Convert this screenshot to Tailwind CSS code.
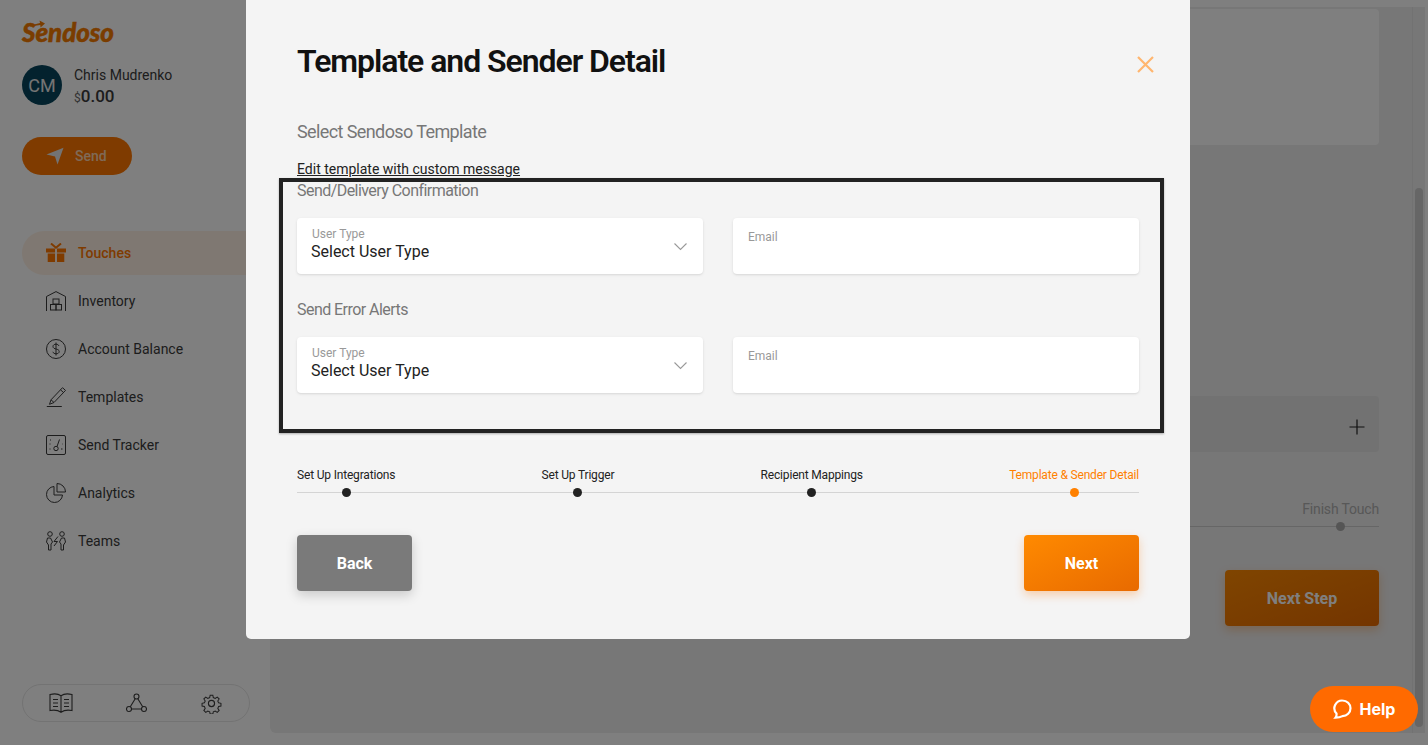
<!DOCTYPE html>
<html lang="en">
<head>
  <meta charset="UTF-8" />
  <title>Template and Sender Detail</title>
  <script src="https://cdn.jsdelivr.net/npm/@tailwindcss/browser@4"></script>
</head>
<body class="font-['Roboto',sans-serif] text-[#3a3a3a]">
  <div class="relative w-[1428px] h-[745px] overflow-hidden bg-white flex">

    <!-- Sidebar -->
    <aside class="w-[270px] shrink-0 h-full flex flex-col pl-[22px]">
      <div class="relative h-[22px] mt-[21px] flex items-center">
        <span class="font-['Lato',sans-serif] font-black italic text-[26px] leading-[22px] tracking-[-0.1px] text-[#f47a00] [-webkit-text-stroke:0.5px_#f47a00]">Sendoso</span>
        <svg class="absolute left-[8px] top-[-1px]" width="16" height="8" viewBox="0 0 16 8" fill="#f47a00"><path d="M0 5.500 L10 3 L9.500 0.500 L15 3.500 L10.500 7.500 L10.300 5 L0 6.500Z"/></svg>
      </div>

      <div class="flex items-center mt-[22px] h-[40px]">
        <div class="w-[40px] h-[40px] rounded-full bg-[#06455c] flex items-center justify-center text-[#e8e8e8] text-[18px]">CM</div>
        <div class="ml-[12px] pt-[5px]">
          <div class="text-[14px] leading-[18px]">Chris Mudrenko</div>
          <div class="text-[17px] leading-[24px] font-medium"><span class="text-[12px] font-normal text-[#666]">$</span>0.00</div>
        </div>
      </div>

      <button class="mt-[32px] w-[110px] h-[38px] rounded-full bg-[#ff7700] text-white/70 font-medium text-[14px] flex items-center pl-[24px]">
        <svg width="18" height="18" viewBox="0 0 18 18" fill="#e6e6e6"><path d="M0.500 7.500 L17.500 0.800 L11.500 17.500 L9 9.500Z"/></svg>
        <span class="ml-[11px]">Send</span>
      </button>

      <nav class="mt-[56px] text-[14px]">
        <a class="flex items-center h-[44px] w-[224px] rounded-l-full rounded-r-[22px] bg-[#ff7700]/10 pl-[24px] text-[#ff7700] font-medium">
          <svg width="20" height="20" viewBox="0 0 20 20" fill="#ff7700"><path d="M0 5.500h9v4H0zM11 5.500h9v4h-9zM1.700 10.500H9V19H1.700zM11 10.500h7.300V19H11z"/><path d="M5 0.500 L10 4.800 L15 0.500" fill="none" stroke="#ff7700" stroke-width="2"/></svg>
          <span class="ml-[12px]">Touches</span>
        </a>
        <a class="flex items-center h-[48px] pl-[24px] mt-[2px]">
          <svg width="20" height="20" viewBox="0 0 20 20" fill="none" stroke="#3a3a3a" stroke-width="1"><path d="M0.500 20V5.500L10 0.600l9.500 4.900V20"/><rect x="7" y="8" width="6" height="5"/><rect x="4.500" y="13.500" width="5.500" height="5.500"/><rect x="10" y="13.500" width="5.500" height="5.500"/></svg>
          <span class="ml-[12px]">Inventory</span>
        </a>
        <a class="flex items-center h-[48px] pl-[24px]">
          <svg width="20" height="20" viewBox="0 0 20 20" fill="none" stroke="#3a3a3a" stroke-width="1"><circle cx="10" cy="10" r="9.500"/><path d="M13 7c-.5-1.200-1.600-1.800-3-1.800-1.700 0-3 .8-3 2.300 0 3.400 6.200 1.700 6.200 5 0 1.500-1.400 2.300-3.200 2.300-1.500 0-2.700-.7-3.200-2M10 3.500v13"/></svg>
          <span class="ml-[12px]">Account Balance</span>
        </a>
        <a class="flex items-center h-[48px] pl-[24px]">
          <svg width="20" height="20" viewBox="0 0 20 20" fill="none" stroke="#3a3a3a" stroke-width="1"><path d="M16.500 0.700l3 2.700L8 15.500l-4.500 1.800 1.500-4.500zM14.500 2.800l3 2.700M5 12.800l3 2.700M0.800 19.500h15"/></svg>
          <span class="ml-[12px]">Templates</span>
        </a>
        <a class="flex items-center h-[48px] pl-[24px]">
          <svg width="20" height="20" viewBox="0 0 20 20" fill="none" stroke="#3a3a3a" stroke-width="1"><rect x="0.500" y="0.500" width="19" height="19" rx="1.500"/><path d="M4 5h1M3.500 9h1M3.500 14h1M15 14h1.500M16 9h.5"/><circle cx="10" cy="13.500" r="2.200"/><path d="M11 11.500l2.500-7"/></svg>
          <span class="ml-[12px]">Send Tracker</span>
        </a>
        <a class="flex items-center h-[48px] pl-[24px]">
          <svg width="20" height="20" viewBox="0 0 20 20" fill="none" stroke="#3a3a3a" stroke-width="1"><path d="M8 3.500a8 8 0 1 0 8.500 8.500H8z"/><path d="M11 0.500a8.500 8.500 0 0 1 8.500 8.500H11z"/></svg>
          <span class="ml-[12px]">Analytics</span>
        </a>
        <a class="flex items-center h-[48px] pl-[24px]">
          <svg width="20" height="20" viewBox="0 0 20 20" fill="none" stroke="#3a3a3a" stroke-width="1"><circle cx="4" cy="3" r="2.300"/><circle cx="16" cy="3" r="2.300"/><path d="M0.500 11l1-4h3l2 4-1.500 2v6H2.500v-5zM19.500 11l-1-4h-3l-2 4 1.500 2v6h2.500v-5zM12 5.500L8 10.500h3.500L8 15"/></svg>
          <span class="ml-[12px]">Teams</span>
        </a>
      </nav>

      <div class="absolute left-[22px] top-[684px] w-[228px] h-[38px] rounded-full border border-[#e6e6e6]">
        <svg class="absolute left-[26px] top-[8px]" width="24" height="21" viewBox="0 0 24 21" fill="none" stroke="#3a3a3a" stroke-width="1.100"><path d="M1 1.500c4-1 8-1 11 1.200 3-2.200 7-2.200 11-1.200v16c-4-.8-8-.5-11 1.800-3-2.300-7-2.600-11-1.800zM12 2.700v16.600M4 6.500h5M4 10h5M4 13.500h5M15 6.500h5M15 10h5M15 13.500h5"/></svg>
        <svg class="absolute left-[103px] top-[8px]" width="21" height="20" viewBox="0 0 21 20" fill="none" stroke="#3a3a3a" stroke-width="1.100"><circle cx="10.500" cy="3.500" r="2.500"/><circle cx="3" cy="16" r="2.500"/><circle cx="18" cy="16" r="2.500"/><path d="M9.200 5.700L4.300 13.800M11.800 5.700l4.900 8.100M5.500 16h10"/></svg>
        <svg class="absolute left-[178px] top-[8px]" width="21" height="21" viewBox="0 0 24 24" fill="none" stroke="#3a3a3a" stroke-width="1.300"><circle cx="12" cy="12" r="3.500"/><path d="M10.300 1.500h3.400l.6 3 2.400 1 2.600-1.700 2.400 2.400-1.700 2.600 1 2.400 3 .6v3.400l-3 .6-1 2.400 1.700 2.600-2.400 2.400-2.600-1.700-2.400 1-.6 3h-3.400l-.6-3-2.400-1-2.600 1.700-2.400-2.400 1.700-2.600-1-2.400-3-.6v-3.400l3-.6 1-2.400-1.700-2.600 2.400-2.400 2.600 1.700 2.400-1z" transform="translate(1.200 1.200) scale(.9)"/></svg>
      </div>
    </aside>

    <!-- Page behind the modal -->
    <main class="flex-1 mt-[7px] mb-[12px] mr-[3px] bg-[#eeeeee] rounded-l-[6px] flex">
      <div class="flex-1 pl-[30px] pr-[33px] pt-[2px]">
        <div class="h-[136px] bg-white rounded-[4px]"></div>
        <div class="mt-[251px] h-[56px] bg-[#e4e4e4] rounded-[4px] flex items-center justify-end pr-[15px]">
          <svg class="mt-[6px] ml-px -mr-px" width="16" height="16" viewBox="0 0 16 16" stroke="#222" stroke-width="1.200"><path d="M8 0.500v15M0.500 8h15"/></svg>
        </div>
        <div class="mt-[47px] relative">
          <div class="text-right text-[14px] leading-[20px] tracking-[-0.18px] text-[#b0b0b0]">Finish Touch</div>
          <div class="mt-[7px] h-px bg-[#ccc]"></div>
          <div class="absolute right-[34px] top-[23px] w-[9px] h-[9px] rounded-full bg-[#aaa]"></div>
        </div>
        <div class="flex justify-end mt-[43px]">
          <button class="w-[154px] h-[56px] rounded-[4px] bg-linear-to-br from-[#ff8a00] to-[#e86a00] text-white font-bold text-[16px] pt-px shadow-[0_4px_10px_rgba(255,119,0,0.3)]">Next Step</button>
        </div>
      </div>
      <div class="w-[13px] border-l border-[#e4e4e4] pl-[2px] pt-[181px]">
        <div class="w-[8px] h-[539px] rounded-full bg-[#cccccc]"></div>
      </div>
    </main>

    <!-- Overlay -->
    <div class="absolute inset-0 bg-black/50"></div>

    <!-- Modal -->
    <div class="absolute left-[246px] top-0 w-[944px] h-[639px] bg-[#f4f4f4] rounded-b-[5px] px-[51px] pt-[41px]">
      <svg class="absolute left-[891px] top-[56px]" width="17" height="17" viewBox="0 0 17 17" stroke="#ffb66f" stroke-width="2.200"><path d="M1 1l15 15M16 1L1 16"/></svg>

      <h1 class="text-[32px] leading-[40px] font-semibold tracking-[-1.05px] text-[#111]">Template and Sender Detail</h1>
      <div class="mt-[39px] text-[18px] leading-[24px] tracking-[-0.6px] text-[#777]">Select Sendoso Template</div>
      <a class="block mt-[15px] text-[14px] leading-[20px] underline text-[#222]">Edit template with custom message</a>

      <div class="-mt-px -ml-[18px] -mr-[25px] h-[255px] border-4 border-[#222] shadow-[0_1px_2px_rgba(0,0,0,0.3)] pl-[14px] pr-[21px]">
        <div class="text-[16px] leading-[18px] tracking-[-0.55px] text-[#777]">Send/Delivery Confirmation</div>
        <div class="grid grid-cols-2 gap-[30px] mt-[18px]">
          <div class="relative h-[56px] bg-white rounded-[4px] shadow-sm pl-[14px] pt-[9px]">
            <div class="text-[12px] leading-[14px] text-[#999] pl-px">User Type</div>
            <div class="text-[16px] leading-[20px] mt-[1px] text-[#222]">Select User Type</div>
            <svg class="absolute right-[16px] top-[25px]" width="13" height="8" viewBox="0 0 13 8" fill="none" stroke="#999" stroke-width="1.100"><path d="M0.500 0.500l6 6 6-6"/></svg>
          </div>
          <div class="h-[56px] bg-white rounded-[4px] shadow-sm pl-[15px] pt-[12px]">
            <div class="text-[12px] leading-[14px] text-[#999]">Email</div>
          </div>
        </div>
        <div class="mt-[27px] text-[16px] leading-[18px] tracking-[-0.55px] text-[#777]">Send Error Alerts</div>
        <div class="grid grid-cols-2 gap-[30px] mt-[18px]">
          <div class="relative h-[56px] bg-white rounded-[4px] shadow-sm pl-[14px] pt-[9px]">
            <div class="text-[12px] leading-[14px] text-[#999] pl-px">User Type</div>
            <div class="text-[16px] leading-[20px] mt-[1px] text-[#222]">Select User Type</div>
            <svg class="absolute right-[16px] top-[25px]" width="13" height="8" viewBox="0 0 13 8" fill="none" stroke="#999" stroke-width="1.100"><path d="M0.500 0.500l6 6 6-6"/></svg>
          </div>
          <div class="h-[56px] bg-white rounded-[4px] shadow-sm pl-[15px] pt-[12px]">
            <div class="text-[12px] leading-[14px] text-[#999]">Email</div>
          </div>
        </div>
      </div>

      <!-- Steps -->
      <div class="relative mt-[34px] flex justify-between text-[12px] leading-[16px] tracking-[-0.18px] text-[#222]">
        <div class="absolute left-0 right-0 top-[25px] h-px bg-[#d4d4d4]"></div>
        <div class="relative flex flex-col items-center"><span>Set Up Integrations</span><span class="mt-[5px] w-[9px] h-[9px] rounded-full bg-[#222]"></span></div>
        <div class="relative flex flex-col items-center"><span>Set Up Trigger</span><span class="mt-[5px] w-[9px] h-[9px] rounded-full bg-[#222]"></span></div>
        <div class="relative flex flex-col items-center"><span>Recipient Mappings</span><span class="mt-[5px] w-[9px] h-[9px] rounded-full bg-[#222]"></span></div>
        <div class="relative flex flex-col items-center text-[#ff8000]"><span>Template &amp; Sender Detail</span><span class="mt-[5px] w-[9px] h-[9px] rounded-full bg-[#ff8000]"></span></div>
      </div>

      <div class="flex justify-between mt-[38px]">
        <button class="w-[115px] h-[56px] rounded-[4px] bg-[#7a7a7a] text-white font-bold text-[16px] pt-[2px] shadow-[0_4px_12px_rgba(0,0,0,0.18)]">Back</button>
        <button class="w-[115px] h-[56px] rounded-[4px] bg-linear-to-br from-[#ff8a00] to-[#e86a00] text-white font-bold text-[16px] pt-[2px] shadow-[0_4px_10px_rgba(255,119,0,0.3)]">Next</button>
      </div>
    </div>

    <!-- Help -->
    <button class="absolute left-[1310px] top-[686px] w-[108px] h-[46px] rounded-full bg-[#ff6a00] text-white font-['Inter',sans-serif] font-bold text-[16px] flex items-center justify-center gap-[8px]">
      <svg width="19" height="20" viewBox="0 0 19 20" fill="none" stroke="#fff" stroke-width="2.200"><path d="M9.500 1.500a8 7.800 0 0 1 0 15.600c-1.500.8-4 1.500-7 1.500 1-1.200 1.200-2.500 1-4A7.800 7.800 0 0 1 9.500 1.500z"/></svg>
      <span>Help</span>
    </button>
  </div>
</body>
</html>
